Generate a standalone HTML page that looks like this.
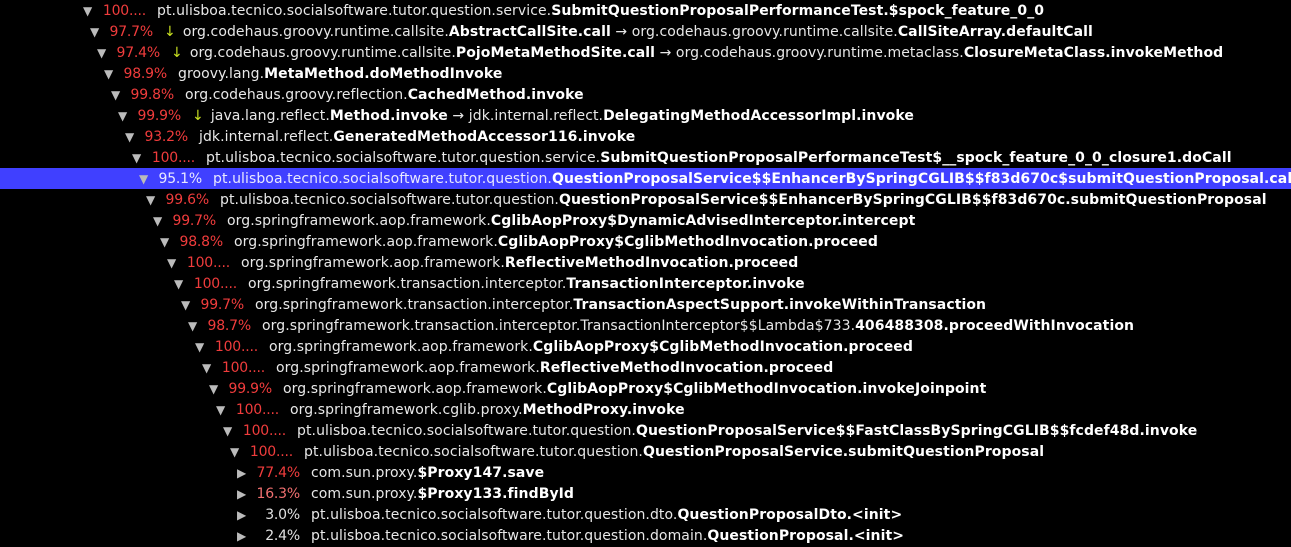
<!DOCTYPE html>
<html><head><meta charset="utf-8"><style>
body{margin:0;background:#000;width:1291px;height:546px;overflow:hidden;font-family:"DejaVu Sans","Liberation Sans",sans-serif;font-size:14px;color:#e8e8e8}
.r{position:absolute;left:0;width:1291px;height:21px;line-height:21px;white-space:nowrap}
.r.sel{background:#4040ff}
.r span{top:1px}
.t{position:absolute;font-size:12px;color:#bbb}
.p{position:absolute;width:50px;text-align:right;color:#f03c3c;letter-spacing:-0.2px}
.n{position:absolute;letter-spacing:0.08px}
.a{color:#c8e020;margin-right:7px;position:relative;top:0 !important}
b{color:#fff}
</style></head><body>
<div id="c"></div>
<script>
var rows=[
[0,"▼","100....","","pt.ulisboa.tecnico.socialsoftware.tutor.question.service.<b>SubmitQuestionProposalPerformanceTest.$spock_feature_0_0</b>"],
[1,"▼","97.7%","↓","org.codehaus.groovy.runtime.callsite.<b>AbstractCallSite.call</b> → org.codehaus.groovy.runtime.callsite.<b>CallSiteArray.defaultCall</b>"],
[2,"▼","97.4%","↓","org.codehaus.groovy.runtime.callsite.<b>PojoMetaMethodSite.call</b> → org.codehaus.groovy.runtime.metaclass.<b>ClosureMetaClass.invokeMethod</b>"],
[3,"▼","98.9%","","groovy.lang.<b>MetaMethod.doMethodInvoke</b>"],
[4,"▼","99.8%","","org.codehaus.groovy.reflection.<b>CachedMethod.invoke</b>"],
[5,"▼","99.9%","↓","java.lang.reflect.<b>Method.invoke</b> → jdk.internal.reflect.<b>DelegatingMethodAccessorImpl.invoke</b>"],
[6,"▼","93.2%","","jdk.internal.reflect.<b>GeneratedMethodAccessor116.invoke</b>"],
[7,"▼","100....","","pt.ulisboa.tecnico.socialsoftware.tutor.question.service.<b>SubmitQuestionProposalPerformanceTest$__spock_feature_0_0_closure1.doCall</b>"],
[8,"▼","95.1%","","pt.ulisboa.tecnico.socialsoftware.tutor.question.<b>QuestionProposalService$$EnhancerBySpringCGLIB$$f83d670c$submitQuestionProposal.call</b>",1],
[9,"▼","99.6%","","pt.ulisboa.tecnico.socialsoftware.tutor.question.<b>QuestionProposalService$$EnhancerBySpringCGLIB$$f83d670c.submitQuestionProposal</b>"],
[10,"▼","99.7%","","org.springframework.aop.framework.<b>CglibAopProxy$DynamicAdvisedInterceptor.intercept</b>"],
[11,"▼","98.8%","","org.springframework.aop.framework.<b>CglibAopProxy$CglibMethodInvocation.proceed</b>"],
[12,"▼","100....","","org.springframework.aop.framework.<b>ReflectiveMethodInvocation.proceed</b>"],
[13,"▼","100....","","org.springframework.transaction.interceptor.<b>TransactionInterceptor.invoke</b>"],
[14,"▼","99.7%","","org.springframework.transaction.interceptor.<b>TransactionAspectSupport.invokeWithinTransaction</b>"],
[15,"▼","98.7%","","org.springframework.transaction.interceptor.TransactionInterceptor$$Lambda$733.<b>406488308.proceedWithInvocation</b>"],
[16,"▼","100....","","org.springframework.aop.framework.<b>CglibAopProxy$CglibMethodInvocation.proceed</b>"],
[17,"▼","100....","","org.springframework.aop.framework.<b>ReflectiveMethodInvocation.proceed</b>"],
[18,"▼","99.9%","","org.springframework.aop.framework.<b>CglibAopProxy$CglibMethodInvocation.invokeJoinpoint</b>"],
[19,"▼","100....","","org.springframework.cglib.proxy.<b>MethodProxy.invoke</b>"],
[20,"▼","100....","","pt.ulisboa.tecnico.socialsoftware.tutor.question.<b>QuestionProposalService$$FastClassBySpringCGLIB$$fcdef48d.invoke</b>"],
[21,"▼","100....","","pt.ulisboa.tecnico.socialsoftware.tutor.question.<b>QuestionProposalService.submitQuestionProposal</b>"],
[22,"▶","77.4%","","com.sun.proxy.<b>$Proxy147.save</b>"],
[22,"▶","16.3%","","com.sun.proxy.<b>$Proxy133.findById</b>",0,"#f07070"],
[22,"▶","3.0%","","pt.ulisboa.tecnico.socialsoftware.tutor.question.dto.<b>QuestionProposalDto.&lt;init&gt;</b>",0,"#e0e0e0"],
[22,"▶","2.4%","","pt.ulisboa.tecnico.socialsoftware.tutor.question.domain.<b>QuestionProposal.&lt;init&gt;</b>",0,"#e0e0e0"]
];
var h="";
rows.forEach(function(r,i){
 var ind=r[0]*7,top=i*21;
 var pc=r[5]?"#e8e8ff":(r[6]||"#f03c3c");
 h+='<div class="r'+(r[5]?' sel':'')+'" style="top:'+top+'px">'+
 '<span class="t" style="left:'+(83+ind)+'px">'+r[1]+'</span>'+
 '<span class="p" style="left:'+(96+ind)+'px;color:'+pc+'">'+r[2]+'</span>'+
 '<span class="n" style="left:'+(157+ind)+'px'+(r[5]?';color:#e8e8ff':'')+'">'+(r[3]?'<span class="a">'+r[3]+'</span>':'')+r[4]+'</span></div>';
});
document.getElementById("c").innerHTML=h;
</script>
</body></html>
